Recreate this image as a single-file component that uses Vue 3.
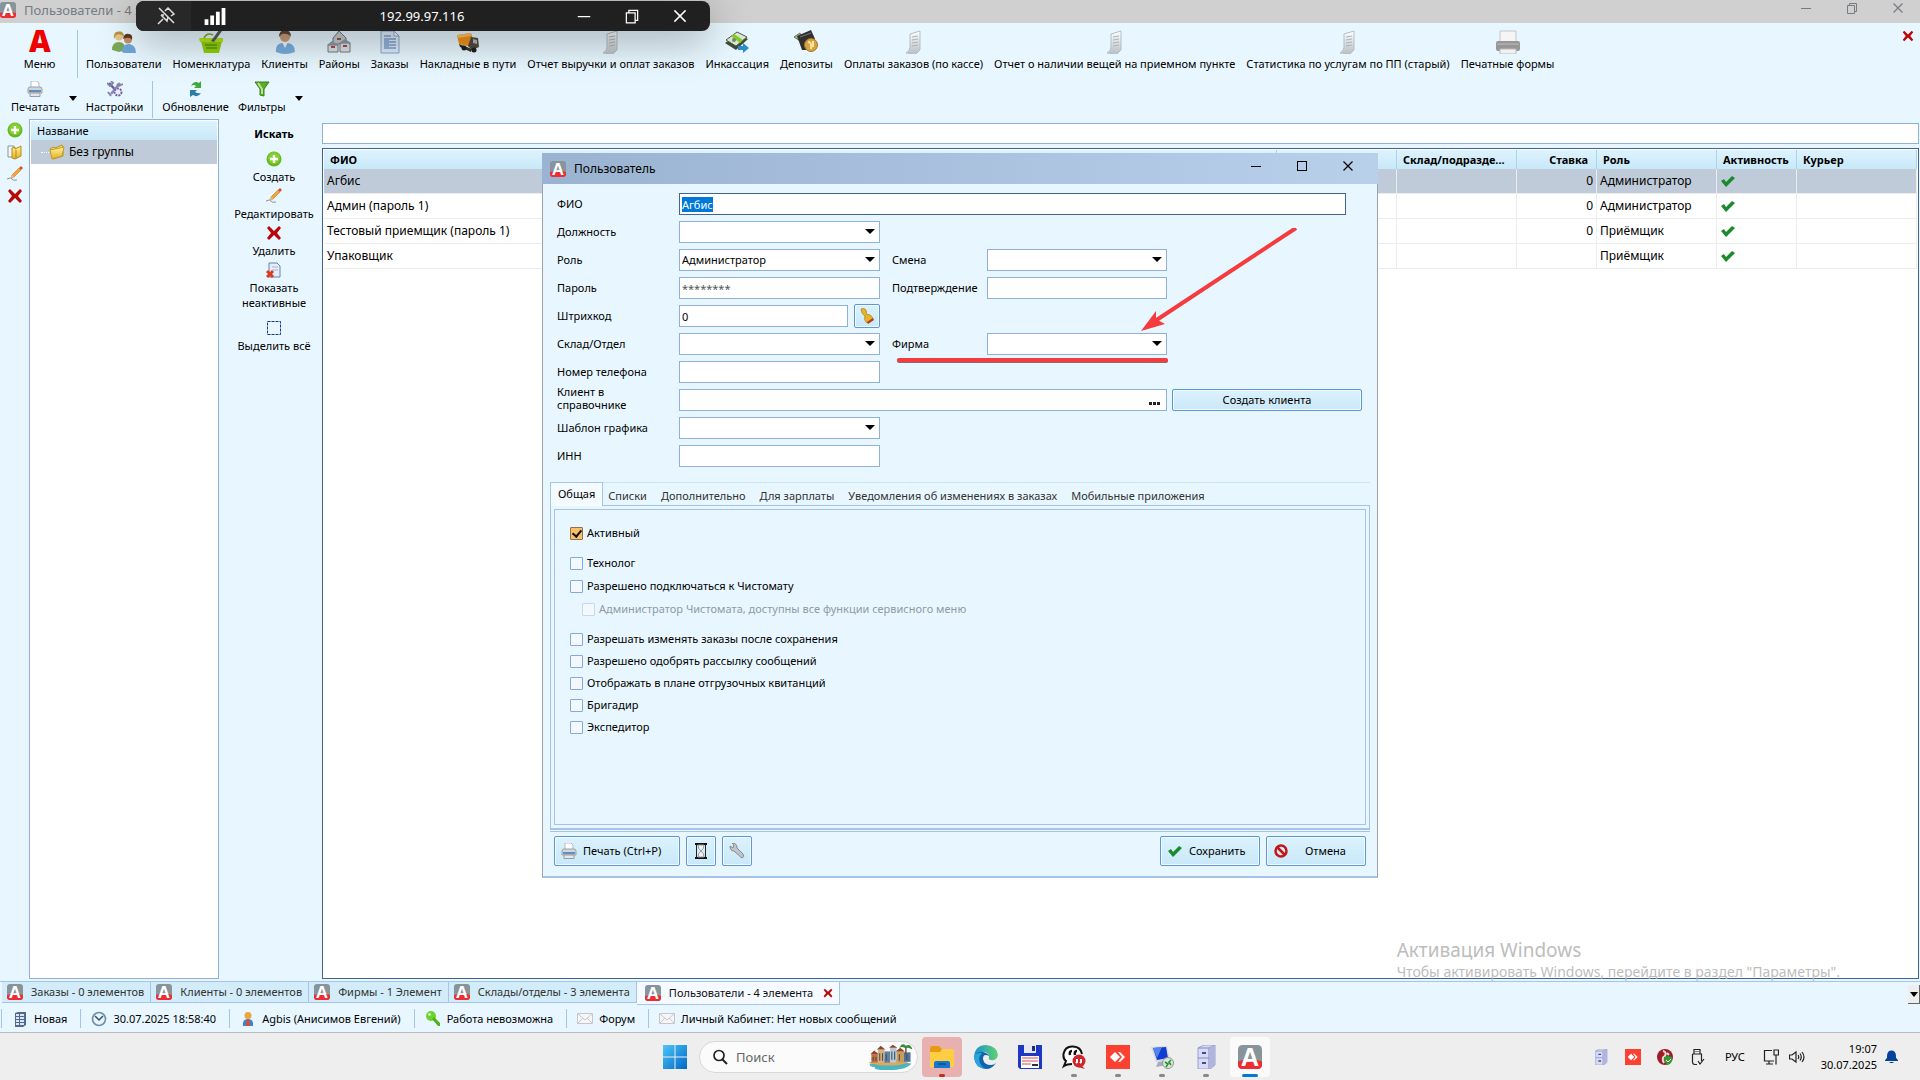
<template>
  <svg class="lettered" aria-hidden="true">
    <symbol id="i-logo" viewBox="0 0 16 16">
      <rect width="16" height="16" rx="3" fill="#87959a" />
      <path d="M0 11 Q8 8 16 11 V13 Q16 16 13 16 H3 Q0 16 0 13z" fill="#ee2c34" />
      <text x="8" y="14" text-anchor="middle" font-family="Liberation Sans, sans-serif" font-weight="bold" font-size="17" fill="#fff">A</text>
    </symbol>
    <symbol id="i-menu" viewBox="0 0 24 24">
      <text x="12" y="22" text-anchor="middle" font-family="Noto Sans, sans-serif" font-weight="900" font-size="30" fill="#ee0000">A</text>
    </symbol>
  </svg>
  <svg class="sprite" aria-hidden="true">
    <defs>
      <linearGradient id="g-blue" x1="0" y1="0" x2="1" y2="1">
        <stop offset="0" stop-color="#4cc6f8" />
        <stop offset="1" stop-color="#0067c5" />
      </linearGradient>
      <linearGradient id="g-gold" x1="0" y1="0" x2="0" y2="1">
        <stop offset="0" stop-color="#fff3a0" />
        <stop offset="1" stop-color="#e3b21c" />
      </linearGradient>
      <linearGradient id="g-grey" x1="0" y1="0" x2="0" y2="1">
        <stop offset="0" stop-color="#ffffff" />
        <stop offset="1" stop-color="#b9bfc4" />
      </linearGradient>
      <linearGradient id="g-edge" x1="0" y1="0" x2="1" y2="0">
        <stop offset="0" stop-color="#1c8fd6" />
        <stop offset="1" stop-color="#5fd46c" />
      </linearGradient>
    </defs>
    <symbol id="i-users" viewBox="0 0 24 24">
      <path d="M0 20 Q0 12 7 12 Q13 12 14 20 L7 22z" fill="#7ba957" />
      <circle cx="7" cy="6.500" r="4" fill="#e8c487" />
      <path d="M2 9 Q1 1 7 1.500 Q12 1 12 7 Q9 3 4 5z" fill="#b79443" />
      <path d="M10 22 Q10 14 17 14 Q24 15 24 23 H12z" fill="#6ea6d8" />
      <circle cx="16" cy="9.500" r="4" fill="#c98e63" />
      <path d="M11 9 Q12 3 17 4 Q21 4 20 10 Q18 6 11 9z" fill="#5b3b22" />
    </symbol>
    <symbol id="i-basket" viewBox="0 0 24 24">
      <path d="M2 11 H23 L20 23 H5z" fill="#8fcf0c" />
      <path d="M0 8 H24 V12 H1z" fill="#b5e61d" />
      <path d="M6 15h12M7 18h11" stroke="#5d9a05" stroke-width="1.500" />
      <path d="M12 11 L20 0 L23 1 L15 12z" fill="#545b60" />
      <path d="M5 8 Q8 2 14 5" stroke="#7cab23" stroke-width="1.500" fill="none" />
    </symbol>
    <symbol id="i-client" viewBox="0 0 24 24">
      <path d="M3 22 Q2 14 9 13 H15 Q22 14 22 22 Q12 26 3 22z" fill="#78aede" />
      <path d="M9 12 L12 18 L15 12z" fill="#eff6fb" />
      <circle cx="12" cy="7" r="5" fill="#c79c76" />
      <path d="M6 7 Q6 0 12 0 Q18 0 18 7 Q15 3 9 4z" fill="#5a4738" />
    </symbol>
    <symbol id="i-houses" viewBox="0 0 24 24">
      <path d="M6 8 L12 1 L19 8 V14 H6z" fill="#c3c9ce" stroke="#717a82" />
      <path d="M1 15 H11 V22 H1zM13 13 H23 V22 H13z" fill="#dadfe2" stroke="#747b82" />
      <path d="M0 15 L5 11 L12 15zM12 13 L18 9 L24 13z" fill="#8c98a2" />
      <path d="M4 17h4M16 16h4M10 9h4" stroke="#a44c45" stroke-width="2" />
    </symbol>
    <symbol id="i-orders" viewBox="0 0 24 24">
      <path d="M3 1 H16 L21 6 V23 H3z" fill="#dcebf9" stroke="#86a7d3" />
      <path d="M16 1 V6 H21z" fill="#fff" stroke="#86a7d3" />
      <path d="M6 6h7M6 9h12M6 12h12M6 15h12M6 18h12" stroke="#7e9dca" stroke-width="1.500" />
      <path d="M6 8h5v9h-5z" fill="#93b2dd" />
    </symbol>
    <symbol id="i-truck" viewBox="0 0 24 24">
      <path d="M1 5 L15 3 L18 13 L16 17 L3 14z" fill="#f09319" />
      <path d="M1 5 L15 3 V6 L2 8z" fill="#ffc163" />
      <path d="M15 7 L22 8 L23 17 L16 20 L12 16z" fill="#544940" />
      <path d="M17 9 L21 10 V14 L17 13z" fill="#a9b7bc" />
      <path d="M3 14 L16 19 L15 22 L4 17z" fill="#333" />
      <circle cx="8" cy="18" r="2.500" fill="#1f1f1f" /><circle cx="18" cy="20" r="2.500" fill="#1f1f1f" />
    </symbol>
    <symbol id="i-sheet" viewBox="0 0 24 24">
      <path d="M8 4 L18 1 V20 L14 24 L4 23 Q8 21 8 17z" fill="url(#g-grey)" stroke="#b2bfc6" />
      <path d="M10 7l6-1M10 10l6-1M10 13l6-1M10 16l6-1" stroke="#aab4ba" />
    </symbol>
    <symbol id="i-cash" viewBox="0 0 24 24">
      <path d="M0 13 L13 4 L23 9 L11 20z" fill="#3e4b3c" />
      <path d="M1 10 L12 2 L22 7 L11 16z" fill="#dfe8d3" stroke="#4b5b49" />
      <path d="M6 6 L9 4 L18 10 L15 13z" fill="#83cf29" />
      <circle cx="9" cy="10" r="2" fill="#758b68" />
      <path d="M13 16 H18 V13 L24 18 L18 23 V20 H13z" fill="#318ccc" />
    </symbol>
    <symbol id="i-deposit" viewBox="0 0 24 24">
      <path d="M0 7 L6 3 L9 13z" fill="#a4b989" stroke="#64745c" />
      <path d="M3 6 L17 0 L21 9 L17 20 L8 20z" fill="#32302e" />
      <path d="M6 7 L17 3" stroke="#777" />
      <circle cx="17" cy="15" r="6.500" fill="#d6a445" stroke="#a8751f" />
      <path d="M14 12 Q18 12 17 19M19 11 V17" stroke="#ffe49a" stroke-width="2" fill="none" />
    </symbol>
    <symbol id="i-printer-grey" viewBox="0 0 24 24">
      <path d="M4 1 H20 V12 H4z" fill="#f5f5f5" stroke="#c5c5c5" />
      <rect x="0" y="11" width="24" height="10" rx="2" fill="#969696" />
      <path d="M4 19 H20 V24 H4z" fill="#f1f1f1" stroke="#bbb" />
      <path d="M1 14h22" stroke="#aaa" stroke-width="2" />
    </symbol>
    <symbol id="i-printer" viewBox="0 0 16 16">
      <path d="M4 0 H10 L12 2 V7 H4z" fill="#fff" stroke="#b5bbc0" />
      <path d="M1 8 Q1 6 3 6 H13 Q15 6 15 8 V12 H1z" fill="#d2d5d9" stroke="#99a2aa" />
      <path d="M2 10h12" stroke="#5d8fc1" stroke-width="2" />
      <path d="M3 12 H13 V15.500 H3z" fill="#e4e6e8" stroke="#969da3" />
    </symbol>
    <symbol id="i-tools" viewBox="0 0 16 16">
      <path d="M2 2 L13 14" stroke="#655f9f" stroke-width="2.500" />
      <path d="M13 2 L4 13" stroke="#8c86bb" stroke-width="2.500" />
      <path d="M0 2 L3 5 L6 2 L4 0M10 3 L12 5 L16 3M1 11 L4 15" stroke="#847eae" stroke-width="1.800" fill="none" />
      <circle cx="11" cy="11" r="3.500" fill="#eee9fa" stroke="#6c6698" stroke-width="2" stroke-dasharray="2 1" />
    </symbol>
    <symbol id="i-refresh" viewBox="0 0 16 16">
      <path d="M3 5 Q6 -1 11 2 L13 0 V7 H6 L8 5 Q6 3 3 5z" fill="#43a93b" />
      <path d="M13 12 Q10 17 5 14 L2 16 V9 H9 L7 11 Q10 13 13 12z" fill="#2b7da2" />
    </symbol>
    <symbol id="i-filter" viewBox="0 0 16 16">
      <path d="M1 1 H15 L10 8 V15 L6 14 V8z" fill="#5cac2a" stroke="#39801a" />
      <path d="M4 2 L8 8 V13" stroke="#b7e68c" stroke-width="2" fill="none" />
    </symbol>
    <symbol id="i-plus" viewBox="0 0 16 16">
      <circle cx="8" cy="8" r="7.500" fill="#65b81e" />
      <circle cx="8" cy="7" r="6" fill="#83ce30" />
      <path d="M8 4 V12M4 8 H12" stroke="#fff" stroke-width="2.400" />
    </symbol>
    <symbol id="i-folder-copy" viewBox="0 0 16 16">
      <path d="M1 2 H7 V13 H1z" fill="#f5f7fa" stroke="#8397ae" />
      <path d="M5 4 L8 3 V5 L14 2 V12 L8 15 L5 14z" fill="url(#g-gold)" stroke="#b38b17" />
      <path d="M9 6 V14" stroke="#b38b17" />
    </symbol>
    <symbol id="i-folder" viewBox="0 0 16 16">
      <path d="M1 5 L4 3 L6 4 L13 1 L14 3 V12 L4 15z" fill="#f8dc55" stroke="#b9922c" />
      <path d="M1 6 L11 4 L15 3 L13 12 L3 15z" fill="url(#g-gold)" stroke="#c59a28" />
    </symbol>
    <symbol id="i-pencil" viewBox="0 0 16 16">
      <path d="M0 13 Q4 11 5 13 T10 14" stroke="#8b949a" fill="none" />
      <path d="M4 12 L5 9 L12 2 L14 4 L7 11z" fill="#f4a43a" stroke="#bf7a21" stroke-width=".6" />
      <path d="M12 2 L14 0 L16 2 L14 4z" fill="#d94b42" />
      <path d="M4 12 L5 9 L7 11z" fill="#dfc9a5" />
    </symbol>
    <symbol id="i-cross" viewBox="0 0 16 16">
      <path d="M3 1 L8 6 L13 1 L15 3 L11 8 L15 13 L13 15 L8 10 L3 15 L1 13 L5 8 L1 3z" fill="#b80808" />
    </symbol>
    <symbol id="i-inactive" viewBox="0 0 16 16">
      <path d="M3 1 H11 L14 4 V15 H3z" fill="#e4edfb" stroke="#6b80ac" />
      <path d="M6 5h6M6 8h6" stroke="#a3b5d5" />
      <path d="M1 9 L7 15M7 9 L1 15" stroke="#dd3b20" stroke-width="3" />
    </symbol>
    <symbol id="i-select-all" viewBox="0 0 16 16">
      <rect x="1.500" y="1.500" width="13" height="13" fill="none" stroke="#17368c" stroke-dasharray="3 1" />
    </symbol>
    <symbol id="i-check" viewBox="0 0 16 16">
      <path d="M1 8 L4 6 L6 9 L12 3 L15 5 L6 14z" fill="#1b8a2d" />
    </symbol>
    <symbol id="i-ban" viewBox="0 0 16 16">
      <circle cx="8" cy="8" r="5.500" fill="none" stroke="#c41414" stroke-width="2.500" />
      <path d="M4 4 L12 12" stroke="#c41414" stroke-width="2.500" />
    </symbol>
    <symbol id="i-stamp" viewBox="0 0 16 16">
      <path d="M2 1 Q5 -1 7 2 Q8 4 7 6 Q12 6 14 10 L8 15 Q4 12 6 8 Q2 6 2 1z" fill="#e6b42a" stroke="#a3761a" stroke-width=".6" />
      <path d="M14 10 L15 12 L9 16 L8 14z" fill="#bd3a20" />
    </symbol>
    <symbol id="i-hourglass" viewBox="0 0 16 16">
      <path d="M2 1h12M2 15h12" stroke="#111" stroke-width="2" />
      <path d="M3.500 1v14M12.500 1v14" stroke="#222" />
      <path d="M5 2 H11 Q11 6 8 8 Q5 6 5 2zM5 14 Q5 10 8 8 Q11 10 11 14z" fill="#f2f2f2" stroke="#999" />
    </symbol>
    <symbol id="i-wrench" viewBox="0 0 16 16">
      <path d="M1 3 L4 5 L5 2 L3 0 Q8 0 8 5 L14 11 Q16 14 13 15 L5 8 Q1 8 1 3z" fill="#c3c6c8" stroke="#83888c" />
    </symbol>
    <symbol id="i-server" viewBox="0 0 16 16">
      <path d="M3 2 L6 1 H14 V14 L11 16 H3z" fill="#51688f" />
      <path d="M4 4h3M8 4h4M4 7h3M8 7h4M4 10h3M8 10h4M4 13h3M8 13h4" stroke="#dae6f8" stroke-width="2" />
    </symbol>
    <symbol id="i-clock" viewBox="0 0 16 16">
      <circle cx="8" cy="8" r="6.500" fill="#e9f3fa" stroke="#6d8da5" stroke-width="1.600" />
      <path d="M4 5 L8 9 L12 5" stroke="#2e5673" stroke-width="1.500" fill="none" />
    </symbol>
    <symbol id="i-person" viewBox="0 0 16 16">
      <path d="M3 15 Q2 8 8 8 Q14 8 13 15z" fill="#3b86c8" />
      <path d="M7 8h2l1 7h-4z" fill="#e04a30" />
      <circle cx="8" cy="4.500" r="3.500" fill="#e8a63c" />
    </symbol>
    <symbol id="i-key" viewBox="0 0 16 16">
      <circle cx="6" cy="5" r="5" fill="#6bd32c" />
      <circle cx="4.500" cy="3.500" r="1.300" fill="#fff" />
      <path d="M7 8 L13 15 H15 V12 L9 6z" fill="#4db317" />
    </symbol>
    <symbol id="i-mail" viewBox="0 0 16 16">
      <path d="M.5 2.500 H15.500 V12.500 H.5z" fill="#f6f6f6" stroke="#c4c8cc" />
      <path d="M1 3 L8 9 L15 3M1 12l5-5M15 12l-5-5" stroke="#c4c8cc" fill="none" />
    </symbol>
    <symbol id="i-windows" viewBox="0 0 24 24">
      <path d="M0 0h11.500v11.500H0zM12.500 0H24v11.500H12.500zM0 12.500h11.500V24H0zM12.500 12.500H24V24H12.500z" fill="url(#g-blue)" />
    </symbol>
    <symbol id="i-explorer" viewBox="0 0 24 24">
      <path d="M0 3 Q0 1 2 1 H9 L12 4 V8 H0z" fill="#e79b12" />
      <path d="M0 7 H10 L12 4 H22 Q24 4 24 6 V22 H0z" fill="#ffcd43" />
      <path d="M4 23 V18 Q4 16 6 16 H18 Q20 16 20 18 V23z" fill="#1577cc" />
      <path d="M8 19h8" stroke="#0b4f95" stroke-width="1.500" />
    </symbol>
    <symbol id="i-edge" viewBox="0 0 24 24">
      <path d="M0 12 Q1 0 12 0 Q23 1 24 10 Q23 16 17 15 Q14 15 15 12 Q15 7 9 7 Q3 7 0 12z" fill="url(#g-edge)" />
      <path d="M0 12 Q3 6 9 7 Q14 8 15 11 Q9 8 9 14 Q10 20 17 20 Q20 20 22 18 Q18 24 12 24 Q1 23 0 12z" fill="#1263ae" />
      <path d="M0 12 Q3 7 8 8 Q3 13 7 20 Q9 23 12 24 Q1 23 0 12z" fill="#2aa5dc" />
    </symbol>
    <symbol id="i-floppy" viewBox="0 0 24 24">
      <path d="M0 0 H24 V24 H2 L0 22z" fill="#1d38c4" />
      <path d="M6 0 H18 V8 H6z" fill="#e7e9ee" /><path d="M14 1h3v5h-3z" fill="#1d2d8c" />
      <path d="M3 11 H21 V23 H3z" fill="#fff" />
      <path d="M4 13h16M4 16h16M4 19h9" stroke="#e9868c" stroke-width="1.300" />
      <path d="M14 20h6" stroke="#333" stroke-width="2" />
    </symbol>
    <symbol id="i-quotes" viewBox="0 0 24 24">
      <path d="M10 19 Q5 19 2 21 L4 16 Q1 14 1.500 9 Q3 1 11 1.500 Q19 2 20 9" fill="#fff" stroke="#111" stroke-width="2" />
      <path d="M8 10 Q7 6 10 6M13 10 Q12 6 15 6" stroke="#111" stroke-width="2.500" fill="none" />
      <circle cx="17" cy="16" r="6.500" fill="#d0262b" /><path d="M20 21 L23 24 L16 22z" fill="#d0262b" />
      <path d="M15 14v3l-1 1M19 14v3l-1 1" stroke="#fff" stroke-width="2" fill="none" />
    </symbol>
    <symbol id="i-anydesk" viewBox="0 0 24 24">
      <rect width="24" height="24" fill="#fb4232" />
      <path d="M4 12 L9 7 L14 12 L9 17z" fill="#fff" />
      <path d="M12 7 L14 7 L19 12 L14 17 H12 L16 12z" fill="#fff" />
    </symbol>
    <symbol id="i-remote" viewBox="0 0 24 24">
      <path d="M1 2 L17 1 L20 15 L6 17z" fill="#d3d8e5" />
      <path d="M3 3 L16 2 L18 13 L7 15z" fill="#123bd0" /><path d="M3 3 L12 2 L7 13z" fill="#5384ee" />
      <path d="M8 17 L15 16 L17 20 L6 22z" fill="#a6adba" />
      <circle cx="18" cy="18" r="5.500" fill="#dfe6dd" stroke="#8b9790" />
      <path d="M15 17l3 2-2 3M21 15l-2 2 2 3" stroke="#249230" stroke-width="1.600" fill="none" />
    </symbol>
    <symbol id="i-cabinet" viewBox="0 0 24 24">
      <path d="M4 3 L10 0 H21 V20 L16 24 H4z" fill="#d8dbf5" stroke="#9ba0cf" />
      <path d="M4 3 H15 L21 0 M15 3 V24 M4 13 H15" stroke="#8389c0" fill="none" />
      <path d="M15 3 L21 0 V20 L16 24 H15z" fill="#b0b5e0" />
      <path d="M8 8h4M8 18h4" stroke="#454c90" stroke-width="2" />
    </symbol>
    <symbol id="i-shield" viewBox="0 0 16 16">
      <circle cx="8" cy="8" r="8" fill="#9e1d24" />
      <path d="M6 2 Q10 3 8 7 Q4 9 7 14M10 4 L12 6" stroke="#f2dede" stroke-width="2" fill="none" />
      <path d="M7 8 L11 7 L15 8 Q16 14 11 16 Q7 14 7 8z" fill="#2f9d37" />
      <path d="M9 11l2 2 3-3" stroke="#fff" fill="none" />
    </symbol>
    <symbol id="i-usb" viewBox="0 0 16 16">
      <path d="M5 .5 H11 V5 H5zM3.500 5 H12.500 V12 M3.500 5 V13 Q3.500 15.500 6 15.500 H8 M9 12 L11 15 L15 10" fill="none" stroke="#222" stroke-width="1.200" />
      <path d="M7 2v1M9 2v1" stroke="#222" />
    </symbol>
    <symbol id="i-network" viewBox="0 0 16 16">
      <path d="M9 1.500 H1.500 V12 H11 M6 12 V15 M3 15 H10 M11 1 H15.500 V6 H11z M13 6 V15.500" fill="none" stroke="#222" stroke-width="1.200" />
    </symbol>
    <symbol id="i-sound" viewBox="0 0 16 16">
      <path d="M.5 6 H3 L7 3 V13 L3 10 H.5z M9 6 Q10.500 8 9 10 M11 4.500 Q13.500 8 11 11.500 M13 3 Q17 8 13 13" fill="none" stroke="#222" stroke-width="1.200" />
    </symbol>
    <symbol id="i-bell" viewBox="0 0 16 16">
      <path d="M0 12 L2.500 9 V6 Q3 0 8 0 Q13 0 13.500 6 V9 L16 12 V13 H0z M5 14 H11 Q8 17 5 14z" fill="#05439b" />
    </symbol>
    <symbol id="i-city" viewBox="0 0 48 30">
      <path d="M3 22 Q24 18 47 22 Q42 29 22 29 Q5 29 8 26 Q0 25 3 22z" fill="#4ab5bd" />
      <path d="M1 21 Q20 14 46 19 Q38 25 20 24 Q8 24 1 21z" fill="#dda864" />
      <path d="M4 12h7v9h-7z" fill="#c96b36" /><path d="M11 7h7v14h-7z" fill="#d9b17a" />
      <path d="M18 9h6v12h-6z" fill="#647f9e" /><path d="M24 5h7v16h-7z" fill="#b9c9d6" />
      <path d="M31 9h8v12h-8z" fill="#cf9c58" /><path d="M39 10h7v10h-7z" fill="#51739b" />
      <path d="M3 12l4-4 5 4M10 7l4-4 5 4M23 5l4-3 5 3M30 9l5-4 5 4" fill="#8c4630" />
      <path d="M6 15v4M9 15v4M13 11v8M16 11v8M20 12v7M26 9v9M29 9v9M34 12v7M42 12v6" stroke="#38536b" stroke-width="1.200" />
      <path d="M41 12V4" stroke="#6d4c28" stroke-width="1.500" />
      <path d="M34 5 Q37 -1 41 3 Q46 0 48 7 Q43 4 41 6 Q38 3 34 5z" fill="#318e36" />
    </symbol>
    <symbol id="i-min" viewBox="0 0 16 16"><path d="M3 8.500h10" stroke="currentColor" /></symbol>
    <symbol id="i-max" viewBox="0 0 16 16"><rect x="3.500" y="3.500" width="9" height="9" fill="none" stroke="currentColor" /></symbol>
    <symbol id="i-restore" viewBox="0 0 16 16"><path d="M3.500 5.500h7v8h-7zM5.500 5.500v-2h7v8h-2" fill="none" stroke="currentColor" /></symbol>
    <symbol id="i-close" viewBox="0 0 16 16"><path d="M3.500 3.500l9 9M12.500 3.500l-9 9" stroke="currentColor" stroke-width="1.200" /></symbol>
    <symbol id="i-pin" viewBox="0 0 18 18">
      <path d="M2 1l15 15M1 17l5-5M4 8l6 6 1-4M8 4l3-3 6 6-3 2M4 8l3 0" fill="none" stroke="#ddd" stroke-width="1.500" />
    </symbol>
    <symbol id="i-signal" viewBox="0 0 22 18">
      <path d="M0 12h4v6h-4zM6 8h4v10h-4zM12 4h4v14h-4zM18 0h4v18h-4z" fill="#fff" />
    </symbol>
    <symbol id="i-magnifier" viewBox="0 0 16 16">
      <circle cx="7" cy="6.500" r="5" fill="none" stroke="#222" stroke-width="1.700" /><path d="M10.500 10.500l4.500 4.500" stroke="#222" stroke-width="2" />
    </symbol>
  </svg>

  <div class="desktop">
    <header class="titlebar">
      <svg class="s16"><use href="#i-logo" /></svg>
      <span class="titlebar-text">Пользователи - 4 элемента</span>
      <div class="window-buttons">
        <button aria-label="Свернуть"><svg class="s16"><use href="#i-min" /></svg></button>
        <button aria-label="Восстановить"><svg class="s16"><use href="#i-restore" /></svg></button>
        <button aria-label="Закрыть"><svg class="s16"><use href="#i-close" /></svg></button>
      </div>
    </header>

    <nav class="toolbar">
      <button class="tool menu-tool"><svg class="s24"><use href="#i-menu" /></svg>Меню</button>
      <button v-for="t in mainTools" :key="t.label" class="tool">
        <svg class="s24"><use :href="'#i-' + t.icon" /></svg>{{ t.label }}
      </button>
      <button class="close-page" aria-label="Закрыть страницу"><svg class="s12"><use href="#i-cross" /></svg></button>
    </nav>

    <nav class="subbar">
      <button class="tool"><svg class="s16"><use href="#i-printer" /></svg>Печатать</button>
      <i class="caret"></i>
      <button class="tool"><svg class="s16"><use href="#i-tools" /></svg>Настройки</button>
      <i class="divider"></i>
      <button class="tool"><svg class="s16"><use href="#i-refresh" /></svg>Обновление</button>
      <button class="tool"><svg class="s16"><use href="#i-filter" /></svg>Фильтры</button>
      <i class="caret"></i>
    </nav>

    <main class="workspace">
      <div class="side-icons">
        <button v-for="i in sideIcons" :key="i.icon" :aria-label="i.label"><svg class="s16"><use :href="'#i-' + i.icon" /></svg></button>
      </div>
      <section class="tree">
        <div class="tree-head">Название</div>
        <div class="tree-row"><i class="dots"></i><svg class="s16"><use href="#i-folder" /></svg>Без группы</div>
      </section>
      <div class="actions">
        <label class="search-label" for="search">Искать</label>
        <button v-for="a in actions" :key="a.label" class="action">
          <svg class="s16"><use :href="'#i-' + a.icon" /></svg><span>{{ a.label }}</span>
        </button>
      </div>
      <section class="list">
        <input id="search" class="search" type="text" />
        <div class="grid-box">
          <table>
            <colgroup>
              <col />
              <col class="w120" /><col class="w120" /><col class="w80" /><col class="w120" /><col class="w80" /><col class="w120" />
            </colgroup>
            <thead>
              <tr>
                <th>ФИО</th><th></th><th>Склад/подразде...</th><th class="num">Ставка</th><th>Роль</th><th>Активность</th><th>Курьер</th>
              </tr>
            </thead>
            <tbody>
              <tr v-for="(u, n) in users" :key="u.name" :class="{ selected: n === 0 }">
                <td>{{ u.name }}</td><td></td><td></td>
                <td class="num">{{ u.rate }}</td>
                <td>{{ u.role }}</td>
                <td><svg class="s16"><use href="#i-check" /></svg></td>
                <td></td>
              </tr>
            </tbody>
          </table>
          <div class="watermark">
            <p class="watermark-title">Активация Windows</p>
            <p class="watermark-text">Чтобы активировать Windows, перейдите в раздел "Параметры".</p>
          </div>
        </div>
      </section>
    </main>

    <nav class="pages">
      <button v-for="p in pages" :key="p" class="page"><svg class="s16"><use href="#i-logo" /></svg>{{ p }}</button>
      <button class="page active"><svg class="s16"><use href="#i-logo" /></svg>Пользователи - 4 элемента<svg class="s10"><use href="#i-cross" /></svg></button>
      <button class="pages-more" aria-label="Ещё"><i class="caret"></i></button>
    </nav>

    <footer class="status">
      <span v-for="s in status" :key="s.label" class="status-item"><svg class="s16"><use :href="'#i-' + s.icon" /></svg>{{ s.label }}</span>
    </footer>

    <div class="taskbar">
      <div class="apps">
        <button class="app start" aria-label="Пуск"><svg class="s24"><use href="#i-windows" /></svg></button>
        <div class="task-search">
          <svg class="s16"><use href="#i-magnifier" /></svg>
          <input type="text" placeholder="Поиск" aria-label="Поиск" />
          <svg class="city"><use href="#i-city" /></svg>
        </div>
        <button v-for="a in apps" :key="a.icon" class="app" :class="a.state" :aria-label="a.label">
          <svg class="s24"><use :href="'#i-' + a.icon" /></svg>
        </button>
      </div>
      <div class="tray">
        <svg v-for="t in trayIcons" :key="t" class="s16"><use :href="'#i-' + t" /></svg>
        <span class="lang">РУС</span>
        <svg class="s16"><use href="#i-network" /></svg>
        <svg class="s16 sound"><use href="#i-sound" /></svg>
        <div class="clock"><span>19:07</span><span>30.07.2025</span></div>
        <svg class="bell"><use href="#i-bell" /></svg>
      </div>
    </div>

    <div class="remote-bar">
      <button class="pin" aria-label="Закрепить"><svg class="s18"><use href="#i-pin" /></svg></button>
      <svg class="signal"><use href="#i-signal" /></svg>
      <span class="remote-ip">192.99.97.116</span>
      <button aria-label="Свернуть"><svg class="s20"><use href="#i-min" /></svg></button>
      <button aria-label="Восстановить"><svg class="s20"><use href="#i-restore" /></svg></button>
      <button aria-label="Закрыть"><svg class="s20"><use href="#i-close" /></svg></button>
    </div>

    <div class="dialog" role="dialog" aria-label="Пользователь">
      <div class="dialog-title">
        <svg class="s16"><use href="#i-logo" /></svg>
        <span>Пользователь</span>
        <div class="dialog-buttons">
          <button aria-label="Свернуть"><svg class="s16"><use href="#i-min" /></svg></button>
          <button aria-label="Развернуть"><svg class="s16"><use href="#i-max" /></svg></button>
          <button aria-label="Закрыть"><svg class="s16"><use href="#i-close" /></svg></button>
        </div>
      </div>

      <form class="form" @submit.prevent>
        <label for="fio">ФИО</label>
        <input id="fio" ref="fio" v-model="form.fio" class="field wide" type="text" />

        <label for="post">Должность</label>
        <div class="combo"><select id="post" class="field"><option></option></select><i class="caret"></i></div>

        <label for="role">Роль</label>
        <div class="combo"><select id="role" v-model="form.role" class="field"><option>Администратор</option><option>Приёмщик</option></select><i class="caret"></i></div>
        <label class="second" for="shift">Смена</label>
        <div class="combo third"><select id="shift" class="field"><option></option></select><i class="caret"></i></div>

        <label for="pass">Пароль</label>
        <input id="pass" v-model="form.password" class="field masked" type="text" />
        <label class="second" for="confirm">Подтверждение</label>
        <input id="confirm" class="field third" type="text" />

        <label for="barcode">Штрихкод</label>
        <div class="barcode">
          <input id="barcode" v-model="form.barcode" class="field" type="text" />
          <button type="button" class="btn icon-btn" aria-label="Сгенерировать"><svg class="s16"><use href="#i-stamp" /></svg></button>
        </div>

        <label for="store">Склад/Отдел</label>
        <div class="combo"><select id="store" class="field"><option></option></select><i class="caret"></i></div>
        <label class="second" for="firm">Фирма</label>
        <div class="combo third"><select id="firm" class="field"><option></option></select><i class="caret"></i></div>

        <label for="phone">Номер телефона</label>
        <input id="phone" class="field" type="text" />

        <label class="two-line" for="client">Клиент в справочнике</label>
        <div class="combo client"><input id="client" class="field" type="text" /><i class="ellipsis"></i></div>
        <button type="button" class="btn create">Создать клиента</button>

        <label for="schedule">Шаблон графика</label>
        <div class="combo"><select id="schedule" class="field"><option></option></select><i class="caret"></i></div>

        <label for="inn">ИНН</label>
        <input id="inn" class="field" type="text" />
      </form>

      <div class="tabs">
        <button v-for="(t, n) in tabs" :key="t" :class="{ active: n === 0 }">{{ t }}</button>
      </div>
      <div class="tab-page">
        <div class="tab-inner">
          <div v-for="(group, n) in checks" :key="n" class="check-group">
            <label v-for="c in group" :key="c.label" :class="{ disabled: c.disabled }">
              <input v-model="c.on" type="checkbox" :disabled="c.disabled" />{{ c.label }}
            </label>
          </div>
        </div>
      </div>

      <div class="dialog-footer">
        <button class="btn"><svg class="s16"><use href="#i-printer" /></svg><span>Печать (Ctrl+P)</span></button>
        <button class="btn small" aria-label="История"><svg class="s16"><use href="#i-hourglass" /></svg></button>
        <button class="btn small" aria-label="Настройка"><svg class="s16"><use href="#i-wrench" /></svg></button>
        <button class="btn save"><svg class="s16"><use href="#i-check" /></svg><span>Сохранить</span></button>
        <button class="btn cancel"><svg class="s16"><use href="#i-ban" /></svg><span>Отмена</span></button>
      </div>

      <svg class="marker" viewBox="0 0 410 140">
        <path d="M3 133H270" stroke="#8a6b6b" stroke-width="4" stroke-linecap="round" />
        <path d="M3 132H270" stroke="#f53b3d" stroke-width="4" stroke-linecap="round" />
        <path d="M400 0L256 95" stroke="#f53b3d" stroke-width="4" />
        <path d="M245 103L260 83L260 91L269 96z" fill="#f53b3d" />
      </svg>
    </div>
  </div>
</template>

<script setup>
import { onMounted, reactive, ref } from 'vue'

const mainTools = [
  { icon: 'users', label: 'Пользователи' },
  { icon: 'basket', label: 'Номенклатура' },
  { icon: 'client', label: 'Клиенты' },
  { icon: 'houses', label: 'Районы' },
  { icon: 'orders', label: 'Заказы' },
  { icon: 'truck', label: 'Накладные в пути' },
  { icon: 'sheet', label: 'Отчет выручки и оплат заказов' },
  { icon: 'cash', label: 'Инкассация' },
  { icon: 'deposit', label: 'Депозиты' },
  { icon: 'sheet', label: 'Оплаты заказов (по кассе)' },
  { icon: 'sheet', label: 'Отчет о наличии вещей на приемном пункте' },
  { icon: 'sheet', label: 'Статистика по услугам по ПП (старый)' },
  { icon: 'printer-grey', label: 'Печатные формы' }
]

const sideIcons = [
  { icon: 'plus', label: 'Создать группу' },
  { icon: 'folder-copy', label: 'Копировать группу' },
  { icon: 'pencil', label: 'Редактировать группу' },
  { icon: 'cross', label: 'Удалить группу' }
]

const actions = [
  { icon: 'plus', label: 'Создать' },
  { icon: 'pencil', label: 'Редактировать' },
  { icon: 'cross', label: 'Удалить' },
  { icon: 'inactive', label: 'Показать неактивные' },
  { icon: 'select-all', label: 'Выделить всё' }
]

const users = [
  { name: 'Агбис', rate: '0', role: 'Администратор' },
  { name: 'Админ (пароль 1)', rate: '0', role: 'Администратор' },
  { name: 'Тестовый приемщик (пароль 1)', rate: '0', role: 'Приёмщик' },
  { name: 'Упаковщик', rate: '', role: 'Приёмщик' }
]

const pages = [
  'Заказы - 0 элементов',
  'Клиенты - 0 элементов',
  'Фирмы - 1 Элемент',
  'Склады/отделы - 3 элемента'
]

const status = [
  { icon: 'server', label: 'Новая' },
  { icon: 'clock', label: '30.07.2025 18:58:40' },
  { icon: 'person', label: 'Agbis (Анисимов Евгений)' },
  { icon: 'key', label: 'Работа невозможна' },
  { icon: 'mail', label: 'Форум' },
  { icon: 'mail', label: 'Личный Кабинет: Нет новых сообщений' }
]

const apps = [
  { icon: 'explorer', label: 'Проводник', state: 'alert' },
  { icon: 'edge', label: 'Edge', state: '' },
  { icon: 'floppy', label: 'Файлы', state: '' },
  { icon: 'quotes', label: 'Чат', state: 'running' },
  { icon: 'anydesk', label: 'AnyDesk', state: 'running' },
  { icon: 'remote', label: 'Удалённый рабочий стол', state: 'running' },
  { icon: 'cabinet', label: 'Сервер', state: 'running' },
  { icon: 'logo', label: 'Агбис', state: 'current' }
]

const trayIcons = ['cabinet', 'anydesk', 'shield', 'usb']

const tabs = [
  'Общая',
  'Списки',
  'Дополнительно',
  'Для зарплаты',
  'Уведомления об изменениях в заказах',
  'Мобильные приложения'
]

const form = reactive({
  fio: 'Агбис',
  role: 'Администратор',
  password: '********',
  barcode: '0'
})

const checks = reactive([
  [{ label: 'Активный', on: true }],
  [
    { label: 'Технолог', on: false },
    { label: 'Разрешено подключаться к Чистомату', on: false },
    { label: 'Администратор Чистомата, доступны все функции сервисного меню', on: false, disabled: true }
  ],
  [
    { label: 'Разрешать изменять заказы после сохранения', on: false },
    { label: 'Разрешено одобрять рассылку сообщений', on: false },
    { label: 'Отображать в плане отгрузочных квитанций', on: false },
    { label: 'Бригадир', on: false },
    { label: 'Экспедитор', on: false }
  ]
])

const fio = ref(null)

onMounted(() => {
  fio.value.focus()
  fio.value.select()
})
</script>

<style>
body {
  margin: 0;
}
</style>

<style scoped>
.lettered {
  display: none;
}

.sprite {
  position: absolute;
  width: 0;
  height: 0;
}

.desktop {
  position: relative;
  display: flex;
  flex-direction: column;
  min-height: 100vh;
  overflow: hidden;
  background: #e8f7ff;
  color: #000;
  font-family: 'Noto Sans', 'Open Sans', sans-serif;
  font-size: 11px;
  line-height: 16px;
}

.desktop * {
  box-sizing: border-box;
}

button {
  margin: 0;
  padding: 0;
  border: 0;
  background: none;
  color: inherit;
  font: inherit;
  white-space: nowrap;
}

svg {
  display: block;
  flex: none;
}

.s10 { width: 10px; height: 10px; }
.s12 { width: 12px; height: 12px; }
.s16 { width: 16px; height: 16px; }
.s18 { width: 18px; height: 18px; }
.s20 { width: 20px; height: 20px; }
.s24 { width: 24px; height: 24px; }

.caret {
  width: 0;
  height: 0;
  border: 4px solid transparent;
  border-top: 5px solid #000;
  border-bottom: 0;
}

/* main window */
.titlebar {
  display: flex;
  align-items: center;
  height: 23px;
  padding-bottom: 4px;
  background: #d0d0d0;
  color: #767c82;
}

.titlebar-text {
  margin-left: 8px;
  font-size: 13px;
}

.window-buttons {
  display: flex;
  align-self: flex-start;
  gap: 30px;
  margin-left: auto;
  padding-right: 14px;
}

.toolbar {
  display: flex;
  gap: 11px;
  height: 55px;
  padding-top: 7px;
}

.tool {
  display: flex;
  flex-direction: column;
  align-items: center;
  gap: 2px;
}

.menu-tool {
  width: 78px;
  margin-right: -3px;
  padding: 0 0 4px 2px;
  border-right: 1px solid #a5c4ec;
}

.close-page {
  align-self: flex-start;
  margin-left: auto;
  padding-right: 6px;
}

.subbar {
  display: flex;
  gap: 9px;
  height: 40px;
  padding: 3px 11px 0;
}

.subbar .caret {
  margin-top: 15px;
}

.divider {
  width: 1px;
  background: #a5c4ec;
}

.workspace {
  display: flex;
  flex: 1;
  padding: 1px 1px 2px 0;
}

.side-icons {
  display: flex;
  flex-direction: column;
  gap: 6px;
  width: 29px;
  padding: 3px 0 0 7px;
}

.tree {
  width: 190px;
  padding: 1px;
  border: 1px solid #8fb0dc;
  background: #fff;
}

.tree-head {
  height: 19px;
  padding-left: 6px;
  background: linear-gradient(#def3fe, #c8e8f8);
  line-height: 20px;
}

.tree-row {
  display: flex;
  align-items: center;
  height: 24px;
  padding-left: 10px;
  background: #bfcbd9;
  font-size: 12px;
}

.tree-row .s16 {
  margin-right: 4px;
}

.dots {
  width: 8px;
  border-top: 1px dotted #fff;
}

.actions {
  display: flex;
  flex-direction: column;
  align-items: center;
  gap: 4px;
  width: 103px;
  padding: 7px 7px 0 14px;
}

.search-label {
  font-weight: bold;
}

.action {
  display: flex;
  flex-direction: column;
  align-items: center;
  gap: 2px;
  width: 90px;
  line-height: 15px;
  white-space: normal;
}

.search-label + .action {
  margin-top: 5px;
}

.action:last-child {
  margin-top: 6px;
}

.list {
  display: flex;
  flex: 1;
  flex-direction: column;
  gap: 4px;
  min-width: 0;
  padding-top: 4px;
}

.search {
  width: 100%;
  height: 21px;
  border: 1px solid #8fb0dc;
  background: #fff;
}

.grid-box {
  position: relative;
  flex: 1;
  padding: 1px;
  border: 1px solid #3f6596;
  background: #fff;
}

table {
  width: 100%;
  table-layout: fixed;
  border-collapse: separate;
  border-spacing: 0;
}

.w80 { width: 80px; }
.w120 { width: 120px; }

th {
  height: 19px;
  padding: 0 6px;
  border-right: 1px solid #a9d5ec;
  background: linear-gradient(#def3fe, #c8e8f8);
  text-align: left;
  line-height: 18px;
  white-space: nowrap;
}

td {
  height: 25px;
  padding: 0 3px;
  border-right: 1px solid #ececec;
  border-bottom: 1px solid #ececec;
  font-size: 12px;
}

th.num {
  padding-right: 8px;
}

.num {
  text-align: right;
}

.selected td {
  background: #bfcbd9;
}

.watermark {
  position: absolute;
  right: 78px;
  bottom: -4px;
  color: #bdbdbd;
}

.watermark p {
  margin: 0;
}

.watermark-title {
  font-size: 19px;
  line-height: 24px;
}

.watermark-text {
  font-size: 14px;
  line-height: 20px;
}

.pages {
  display: flex;
  align-items: flex-start;
  height: 24px;
  border-top: 1px solid #a5c4ec;
  padding-left: 2px;
}

.page {
  display: flex;
  align-items: center;
  gap: 8px;
  height: 21px;
  padding: 0 6px 0 5px;
  border: 1px solid #a5c4ec;
  border-width: 0 1px 1px 0;
  background: #d2ecf9;
  color: #333;
}

.page.active {
  height: 23px;
  padding: 0 6px 0 8px;
  background: #f4faff;
  color: #111;
}

.page .s10 {
  margin-left: 2px;
}

.pages-more {
  display: grid;
  place-items: center;
  width: 12px;
  height: 19px;
  margin: 3px 0 0 auto;
  border-right: 1px solid #666;
  border-bottom: 1px solid #666;
  background: #eee;
}

.status {
  display: flex;
  height: 27px;
  padding: 4px 0 4px 1px;
}

.status-item {
  display: flex;
  align-items: center;
  gap: 6px;
  padding: 0 13px 0 10px;
  border-left: 1px solid #a5c4ec;
}

/* taskbar */
.taskbar {
  display: flex;
  align-items: center;
  justify-content: flex-end;
  height: 48px;
  border-top: 1px solid #bcbcbc;
  background: #eee;
}

.apps {
  display: flex;
  align-items: center;
  gap: 4px;
  margin: 0 auto;
  padding-left: 332px;
}

.app {
  display: flex;
  align-items: center;
  justify-content: center;
  position: relative;
  width: 40px;
  height: 40px;
  border-radius: 4px;
}

.app.alert {
  background: #e8b0ae;
}

.app.current {
  background: #fafafa;
}

.app.running::after,
.app.alert::after,
.app.current::after {
  content: '';
  position: absolute;
  bottom: 0;
  width: 6px;
  height: 3px;
  border-radius: 2px;
  background: #888;
}

.app.alert::after {
  background: #c42b1c;
}

.app.current::after {
  width: 16px;
  background: #0078d4;
}

.task-search {
  display: flex;
  align-items: center;
  width: 219px;
  height: 32px;
  padding: 0 2px 0 12px;
  border: 1px solid #d8d8d8;
  border-radius: 16px;
  background: #fbfbfb;
}

.task-search input {
  flex: 1;
  min-width: 0;
  padding: 0 0 0 8px;
  border: 0;
  outline: 0;
  background: none;
  font: 13px 'Noto Sans', sans-serif;
}

.task-search input::placeholder {
  color: #666;
}

.city {
  width: 50px;
  height: 28px;
}

.tray {
  display: flex;
  align-items: center;
  gap: 16px;
  padding-right: 22px;
}

.lang {
  margin: 0 2px 0 4px;
}

.sound {
  margin-left: -6px;
}

.clock {
  display: flex;
  flex-direction: column;
  align-items: flex-end;
}

.bell {
  width: 13px;
  height: 16px;
  margin-left: -8px;
}

/* remote session bar */
.remote-bar {
  position: absolute;
  top: 1px;
  left: 136px;
  display: flex;
  align-items: center;
  width: 574px;
  height: 30px;
  padding-right: 20px;
  border-radius: 8px;
  background: #202020;
  box-shadow: 0 8px 40px rgba(0, 0, 0, 0.35);
  color: #fff;
}

.pin {
  display: grid;
  place-items: center;
  width: 55px;
  height: 30px;
  padding-left: 4px;
  border-radius: 8px 0 0 8px;
  background: #282828;
}

.signal {
  width: 22px;
  height: 17px;
  margin-left: 13px;
}

.remote-ip {
  flex: 1;
  padding-left: 44px;
  font-size: 13px;
  text-align: center;
}

.remote-bar button + button {
  margin-left: 28px;
}

/* user dialog */
.dialog {
  position: absolute;
  top: 153px;
  left: 542px;
  width: 836px;
  border: 1px solid #9aa3ad;
  border-top: 0;
  border-bottom: 2px solid #a5c4ec;
  background: #e8f7ff;
}

.dialog-title {
  display: flex;
  align-items: center;
  gap: 8px;
  height: 31px;
  margin: 0 -1px;
  padding: 0 22px 0 8px;
  background: linear-gradient(90deg, #9ab3d1, #b9d0eb);
  font-size: 12px;
}

.dialog-buttons {
  display: flex;
  gap: 30px;
  margin: 0 0 6px auto;
}

.form {
  display: grid;
  grid-template-columns: 122px 201px 107px 180px 5px 1fr;
  grid-auto-rows: 22px;
  row-gap: 6px;
  align-items: center;
  padding: 9px 15px 0 14px;
}

.form > label {
  grid-column: 1;
}

.form > label.second {
  grid-column: 3;
  padding-left: 12px;
}

.form > .third {
  grid-column: 4;
}

.form > label.two-line {
  width: 80px;
  padding-bottom: 4px;
  line-height: 13px;
}

.form > .wide {
  grid-column: 2 / -1;
  width: auto;
  margin-right: 16px;
  border-color: #3f6596;
}

.form > .client {
  grid-column: 2 / 5;
}

.form > .create {
  grid-column: 6;
}

.field {
  display: block;
  width: 100%;
  height: 22px;
  margin: 0;
  padding: 0 2px;
  border: 1px solid #8fb0dc;
  border-radius: 0;
  outline: 0;
  appearance: none;
  background: #fff;
  color: #000;
  font: inherit;
}

.field::selection {
  background: #0078d7;
  color: #fff;
}

.masked {
  color: #555;
}

.combo {
  position: relative;
}

.combo .caret {
  position: absolute;
  top: 8px;
  right: 5px;
  border-width: 5px 5px 0;
  pointer-events: none;
}

.ellipsis {
  position: absolute;
  right: 7px;
  bottom: 6px;
  width: 11px;
  height: 3px;
  background: repeating-linear-gradient(90deg, #222 0 3px, transparent 3px 4px);
}

.barcode {
  display: flex;
  align-items: center;
  gap: 6px;
}

.btn {
  display: flex;
  align-items: center;
  justify-content: center;
  height: 22px;
  border: 1px solid #5b97dc;
  border-radius: 2px;
  background: linear-gradient(#dcf2fe, #c9e8f7);
  box-shadow: inset 0 0 0 1px #f4fbff;
}

.icon-btn {
  flex: none;
  width: 26px;
  height: 24px;
}

.tabs {
  display: flex;
  align-items: flex-end;
  margin: 15px 7px 0;
  border-top: 1px solid #c9e3f7;
}

.tabs button {
  height: 22px;
  padding: 4px 7px 0;
  color: #333;
}

.tabs .active {
  margin: -1px -2px -1px 0;
  height: 24px;
  padding: 0 7px 2px;
  border: 1px solid #a5c4ec;
  border-bottom: 0;
  background: #f4fbff;
  color: #000;
}

.tab-page {
  margin: 0 7px;
  padding: 3px;
  border: 1px solid #a5c4ec;
  border-bottom-width: 2px;
}

.tab-inner {
  min-height: 316px;
  padding: 15px;
  border: 1px solid #a5c4ec;
}

.check-group {
  display: flex;
  flex-direction: column;
  align-items: flex-start;
  gap: 7px;
}

.check-group + .check-group {
  margin-top: 14px;
}

.check-group:last-child {
  gap: 6px;
}

.check-group label {
  display: flex;
  align-items: center;
  gap: 4px;
}

.check-group .disabled {
  padding-left: 12px;
  color: #8f9aa3;
}

.check-group input {
  display: grid;
  place-items: center;
  width: 13px;
  height: 13px;
  margin: 0;
  border: 1px solid #84a9dc;
  border-radius: 1px;
  appearance: none;
  background: #f2f8fe;
}

.check-group input:disabled {
  border-color: #c6d9ec;
}

.check-group input:checked {
  border-color: #8c7648;
  background: #fcc069;
}

.check-group input:checked::after {
  content: '';
  width: 4px;
  height: 7px;
  margin-top: -2px;
  border: solid #111;
  border-width: 0 2px 2px 0;
  transform: rotate(40deg);
}

.dialog-footer {
  display: flex;
  gap: 6px;
  margin: 1px 7px 0;
  padding: 4px 4px 10px;
  border-top: 1px solid #a5c4ec;
}

.dialog-footer .btn {
  justify-content: flex-start;
  gap: 6px;
  width: 126px;
  height: 30px;
  padding-left: 6px;
}

.dialog-footer .small {
  width: 30px;
}

.dialog-footer .save,
.dialog-footer .cancel {
  width: 100px;
}

.dialog-footer .save {
  margin-left: auto;
}

.dialog-footer .cancel {
  gap: 16px;
}

.marker {
  position: absolute;
  top: 75px;
  left: 353px;
  width: 410px;
  height: 140px;
  pointer-events: none;
  fill: none;
}
</style>
